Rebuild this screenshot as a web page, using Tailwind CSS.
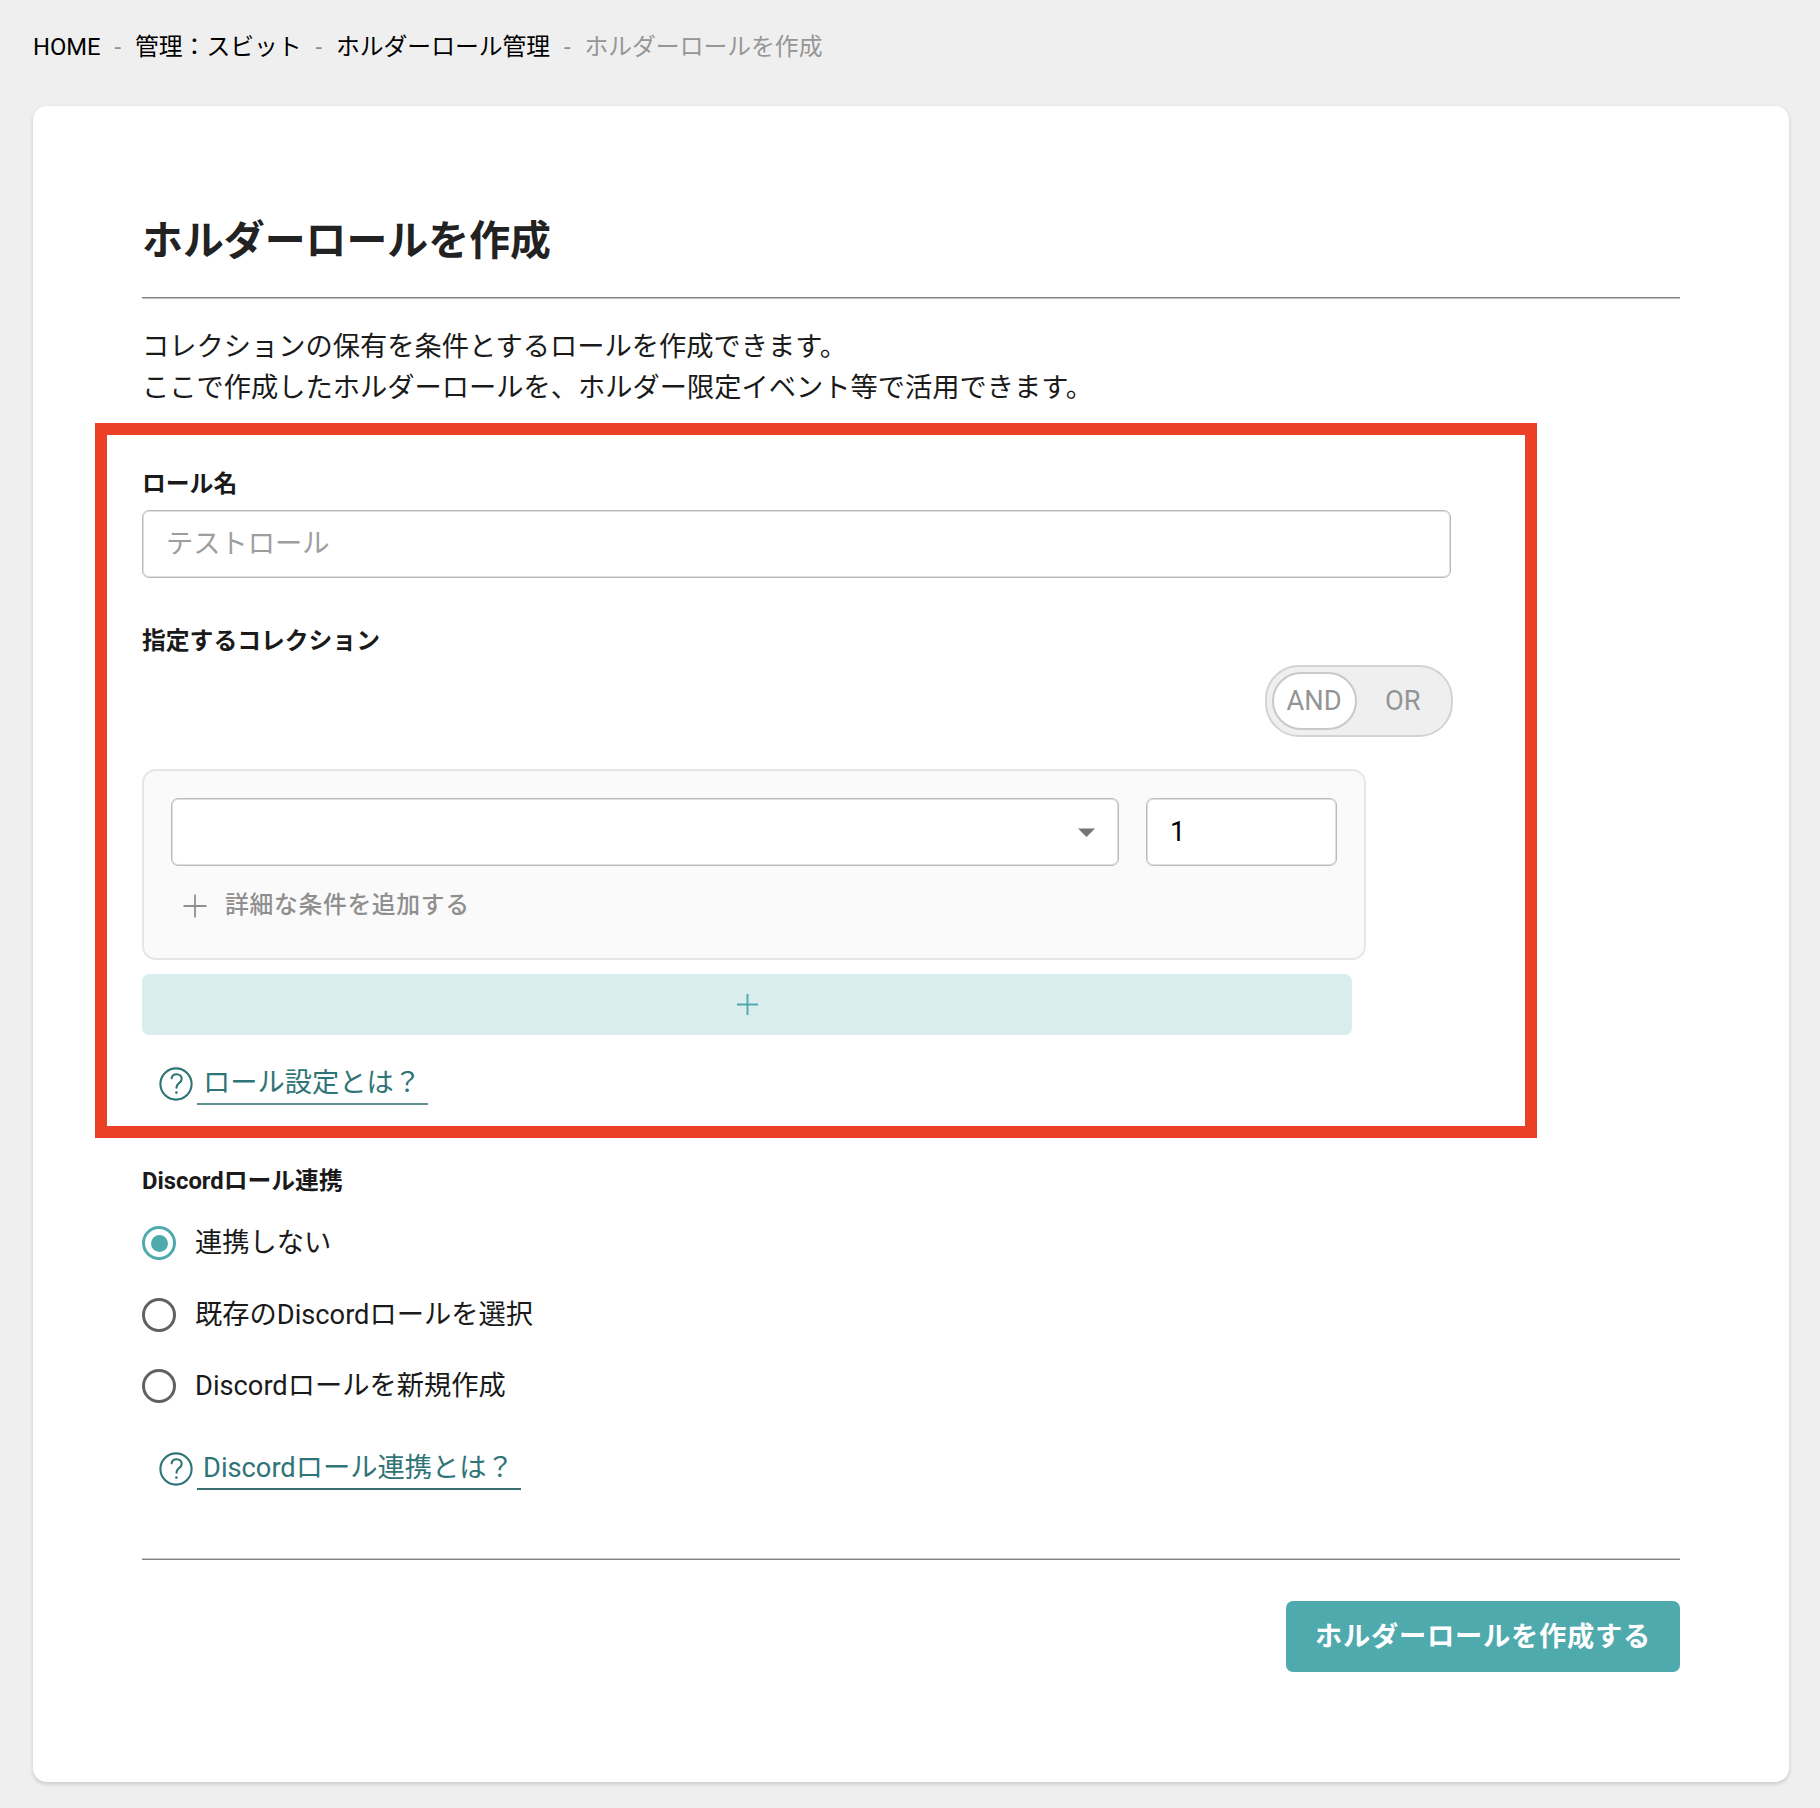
<!DOCTYPE html>
<html lang="ja">
<head>
<meta charset="utf-8">
<title>ホルダーロールを作成</title>
<script src="https://cdn.jsdelivr.net/npm/@tailwindcss/browser@4"></script>
</head>
<body class="relative h-[1808px] w-[1820px] overflow-hidden bg-[#efefef] pl-[33px] pr-[31px] font-['Roboto','Noto_Sans_CJK_JP',sans-serif] text-[27.25px] leading-[41px] text-[#1a1a1a]">
  <nav class="flex h-[106px] items-start gap-[13.9px] pt-[27px] text-[23.8px] text-black">
    <a>HOME</a><span class="text-[#8f8f8f]">-</span>
    <a>管理：スビット</a><span class="text-[#8f8f8f]">-</span>
    <a>ホルダーロール管理</a><span class="text-[#8f8f8f]">-</span>
    <span class="text-[#969696]">ホルダーロールを作成</span>
  </nav>

  <main class="h-[1676px] rounded-[14px] bg-white px-[109px] pt-[105px] shadow-[0_2px_4px_rgba(0,0,0,0.16)]">
    <h1 class="h-[86px] text-[40.9px] leading-[60px] font-bold text-[#222]">ホルダーロールを作成</h1>
    <div class="h-[2px] border-t border-[#808080] bg-[#c4c4c4]"></div>
    <p class="mt-[28px] h-[82px]">コレクションの保有を条件とするロールを作成できます。<br>ここで作成したホルダーロールを、ホルダー限定イベント等で活用できます。</p>

    <!-- Role name -->
    <label class="mt-[55px] block h-[46px] text-[23.8px] font-bold">ロール名</label>
    <div class="flex h-[68px] w-[1309px] items-center rounded-[7px] border border-[#bbb] pt-[1px] pl-[23px] text-[#9e9e9e] shadow-[inset_0_0_0_1px_#dedede]">テストロール</div>

    <!-- Collections -->
    <div class="mt-[43px] h-[44px] text-[23.8px] font-bold">指定するコレクション</div>
    <div class="ml-[1123px] flex h-[72px] w-[188px] items-center rounded-[34px] border-2 border-[#d3d3d3] bg-[#efefef] pl-[5px] text-[#949494]">
      <span class="flex h-[58px] w-[85px] items-center justify-center rounded-[29px] border-2 border-[#c9c9c9] bg-white pr-[1px]">AND</span>
      <span class="ml-[28px]">OR</span>
    </div>
    <div class="mt-[32px] h-[191px] w-[1224px] rounded-[14px] border-2 border-[#e6e6ea] bg-[#fafafa] px-[27px] pt-[27px]">
      <div class="flex gap-[27px]">
        <div class="flex h-[68px] w-[948px] items-center justify-end rounded-[7px] border border-[#bbb] bg-white pr-[23px] shadow-[inset_0_0_0_1px_#dedede]">
          <svg class="h-[9px] w-[17px]" viewBox="0 0 17 9"><path d="M0 .5h17L8.5 9z" fill="#757575"/></svg>
        </div>
        <div class="flex h-[68px] w-[191px] items-center rounded-[7px] border border-[#bbb] bg-white pl-[23px] text-black shadow-[inset_0_0_0_1px_#dedede]">1</div>
      </div>
      <div class="mt-[19px] flex h-[41px] items-center gap-[18px] pl-[12px] text-[23.8px] font-medium tracking-[0.68px] text-[#8f8f8f]">
        <svg class="h-[24px] w-[24px]" viewBox="0 0 24 24" fill="none" stroke="#8f8f8f" stroke-width="1.8"><path d="M12 .5v23M.5 12h23"/></svg>
        <span>詳細な条件を追加する</span>
      </div>
    </div>
    <div class="mt-[14px] flex h-[61px] w-[1210px] items-center justify-center rounded-[7px] bg-[#daedee]">
      <svg class="h-[21px] w-[21px]" viewBox="0 0 21 21" fill="none" stroke="#4faaad" stroke-width="1.9"><path d="M10.5 0v21M0 10.5h21"/></svg>
    </div>
    <div class="mt-[26px] flex h-[44px] items-start gap-[4px] pl-[17px] text-[#2f7476]">
      <svg class="mt-[6px] h-[34px] w-[34px]" viewBox="0 0 34 34" fill="none" stroke="#2f7476" stroke-width="2.1"><circle cx="17" cy="17" r="15.6"/><path d="M12.6 11.3c.5-2.7 2.3-4 4.9-4 3 0 5.2 1.8 5.2 4.6 0 2-1.1 3.1-2.9 4.4-1.9 1.4-2.3 2.2-2.3 4.5" stroke-linecap="round"/><circle cx="17.4" cy="25.6" r="1.3" fill="#2f7476" stroke="none"/></svg>
      <a class="h-[44px] w-[231px] border-b-2 border-[#629092] pt-[2px] pl-[6px]">ロール設定とは？</a>
    </div>

    <!-- Discord linkage -->
    <div class="mt-[56px] h-[65px] text-[23.8px] font-bold">Discordロール連携</div>
    <div class="flex flex-col gap-[37.5px]">
      <div class="flex h-[34px] items-center gap-[19px]"><span class="flex size-[34px] items-center justify-center rounded-full border-3 border-[#4faaad]"><i class="size-[17px] rounded-full bg-[#4faaad]"></i></span><span class="pt-[1px]">連携しない</span></div>
      <div class="flex h-[34px] items-center gap-[19px]"><span class="size-[34px] rounded-full border-3 border-[#616161]"></span><span class="pt-[1px]">既存のDiscordロールを選択</span></div>
      <div class="flex h-[34px] items-center gap-[19px]"><span class="size-[34px] rounded-full border-3 border-[#616161]"></span><span class="pt-[1px]">Discordロールを新規作成</span></div>
    </div>
    <div class="mt-[43px] flex h-[44px] items-start gap-[4px] pl-[17px] text-[#2f7476]">
      <svg class="mt-[6px] h-[34px] w-[34px]" viewBox="0 0 34 34" fill="none" stroke="#2f7476" stroke-width="2.1"><circle cx="17" cy="17" r="15.6"/><path d="M12.6 11.3c.5-2.7 2.3-4 4.9-4 3 0 5.2 1.8 5.2 4.6 0 2-1.1 3.1-2.9 4.4-1.9 1.4-2.3 2.2-2.3 4.5" stroke-linecap="round"/><circle cx="17.4" cy="25.6" r="1.3" fill="#2f7476" stroke="none"/></svg>
      <a class="h-[44px] w-[324px] border-b-2 border-[#3c6e70] pt-[2px] pl-[6px]">Discordロール連携とは？</a>
    </div>

    <div class="mt-[68px] h-[2px] border-b border-[#858585] bg-[#c4c4c4]"></div>
    <div class="mt-[41px] flex justify-end">
      <button class="flex h-[71px] w-[394px] items-center justify-center rounded-[7px] bg-[#4faaad] pt-[2px] font-bold tracking-[0.74px] text-white">ホルダーロールを作成する</button>
    </div>
  </main>

  <!-- Highlight frame drawn over the form -->
  <div class="pointer-events-none absolute top-[423px] left-[95px] h-[715px] w-[1442px] border-12 border-[#eb4025]"></div>
</body>
</html>
